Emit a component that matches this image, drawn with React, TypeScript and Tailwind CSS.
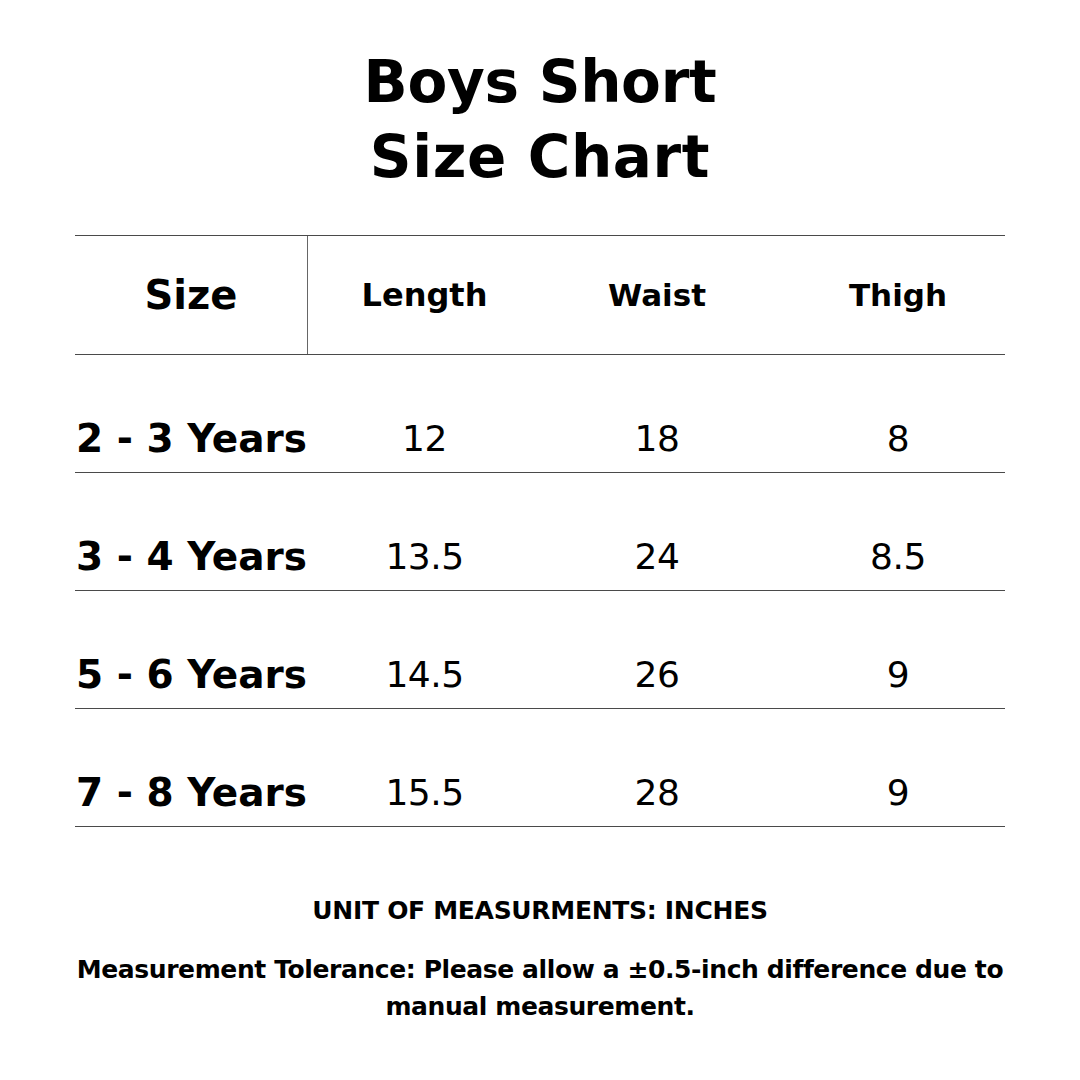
const rows = [
  { size: "2 - 3 Years", length: "12", waist: "18", thigh: "8" },
  { size: "3 - 4 Years", length: "13.5", waist: "24", thigh: "8.5" },
  { size: "5 - 6 Years", length: "14.5", waist: "26", thigh: "9" },
  { size: "7 - 8 Years", length: "15.5", waist: "28", thigh: "9" },
];

export default function App() {
  return (
    <div className="w-[1080px] h-[1080px] bg-white text-black font-['DejaVu_Sans',sans-serif] flex flex-col items-center">
      {/* Title */}
      <h1 className="mt-[45px] text-center text-[58px] leading-[75px] font-bold tracking-[-0.3px]">
        Boys Short
        <br />
        <span className="tracking-[0.6px]">Size Chart</span>
      </h1>

      {/* Table */}
      <div className="mt-[40px] w-[930px]">
        <div className="grid grid-cols-[233px_233px_232px_232px] h-[120px] border-t border-b border-[#4a4a4a]">
          <div className="flex items-center justify-center border-r border-[#666] text-[40px] font-bold">
            Size
          </div>
          <div className="flex items-center justify-center text-[32px] font-bold">Length</div>
          <div className="flex items-center justify-center text-[31px] font-bold">Waist</div>
          <div className="flex items-center justify-center pl-[18px] text-[31px] font-bold">Thigh</div>
        </div>

        {rows.map((r) => (
          <div
            key={r.size}
            className="grid grid-cols-[233px_233px_232px_232px] h-[118px] border-b border-[#4a4a4a] items-end pb-[10px]"
          >
            <div className="text-center text-[39px] leading-[46px] font-bold whitespace-nowrap">
              {r.size}
            </div>
            <div className="text-center text-[36px] leading-[46px] tracking-[-0.5px]">{r.length}</div>
            <div className="text-center text-[36px] leading-[46px] tracking-[-0.5px]">{r.waist}</div>
            <div className="text-center pl-[18px] text-[36px] leading-[46px] tracking-[-0.5px]">{r.thigh}</div>
          </div>
        ))}
      </div>

      {/* Notes */}
      <p className="mt-[68px] text-[25px] leading-[32px] font-bold tracking-[-0.3px]">
        UNIT OF MEASURMENTS: INCHES
      </p>
      <p className="mt-[24px] w-[960px] text-center text-[25px] leading-[37px] font-bold tracking-[-0.4px]">
        Measurement Tolerance: Please allow a ±0.5-inch difference due to manual measurement.
      </p>
    </div>
  );
}
